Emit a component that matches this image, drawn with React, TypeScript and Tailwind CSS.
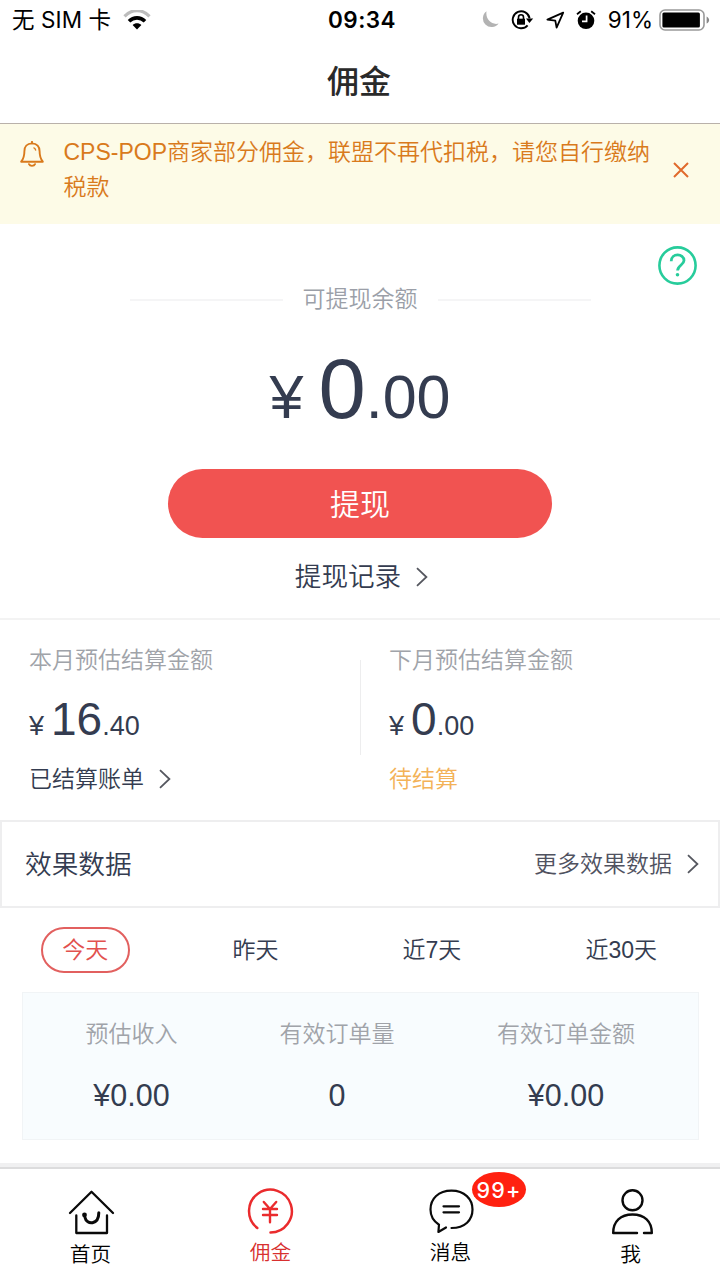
import type { ReactNode } from "react";

const Chevron = () => (
  <svg width="12" height="20" viewBox="0 0 12 20" fill="none" stroke="#55575f" strokeWidth="1.8">
    <path d="M1 1.2 10.4 10 1 18.8" />
  </svg>
);

const StatusBar = () => (
  <div className="flex h-10 items-center justify-between pl-3 pr-[10px] font-['Inter','Noto_Sans_CJK_SC',sans-serif] font-normal text-black">
    <div className="flex w-[240px] items-center">
      <span className="whitespace-pre text-[22.500px] tracking-[0.1px]">无 SIM 卡</span>
      <svg className="ml-3" width="28" height="20" viewBox="0 0 28 20" fill="none">
        <path d="M1.500 6.300C9-1.300 19-1.300 26.500 6.300" stroke="#bdbdbd" strokeWidth="3.200" />
        <path d="M6 11.300c4.600-4.600 11.400-4.600 16 0" stroke="#000" strokeWidth="3.600" />
        <path d="M14 19.400 9.600 14.900c2.400-2.200 6.400-2.200 8.800 0Z" fill="#000" />
      </svg>
    </div>
    <span className="ml-0.5 text-[22.500px] font-semibold tracking-[0.500px]">09:34</span>
    <div className="flex w-[240px] items-center justify-end">
      <svg width="18" height="18" viewBox="0 0 18 18">
        <path d="M5.500.300A8.700 8.700 0 1 0 17.600 12.500C11 14.500 4.200 8.500 5.500.300Z" fill="#b3b3b3" />
      </svg>
      <svg className="ml-[12px]" width="23" height="20" viewBox="0 0 23 20" fill="none" stroke="#000" strokeWidth="1.9">
        <path d="M16.600 15.400A8.500 8.500 0 1 1 18.600 8.400" />
        <path d="m15 8.600 7.200 0-3.800 4.400Z" fill="#000" stroke="none" />
        <rect x="6" y="8.700" width="8" height="6" fill="#000" stroke="none" />
        <path d="M7.500 9V7.200a2.500 2.500 0 0 1 5 0V9" strokeWidth="1.6" />
      </svg>
      <svg className="ml-[12px]" width="19" height="18" viewBox="0 0 19 18" fill="none" stroke="#000" strokeWidth="1.8" strokeLinejoin="round">
        <path d="M17.200 1.600 1.400 8.600 9.300 9.700 10.600 16.600Z" />
      </svg>
      <svg className="ml-[11px]" width="20" height="20" viewBox="0 0 20 20" fill="none">
        <circle cx="10" cy="10.800" r="8.300" fill="#000" />
        <path d="M1 4.200 4.800 1.200M19 4.200 15.200 1.200" stroke="#000" strokeWidth="1.8" />
        <path d="M10.600 5.500v5.800H6" stroke="#fff" strokeWidth="1.7" />
      </svg>
      <span className="ml-[12px] text-[22.500px]">91%</span>
      <svg className="ml-[6px]" width="51" height="22" viewBox="0 0 51 22">
        <rect x="1" y="1" width="44" height="20" rx="5" fill="none" stroke="#999" strokeWidth="1.6" />
        <rect x="3.400" y="3.600" width="37.500" height="14.800" rx="1.5" fill="#000" />
        <path d="M47.600 7.400c3.400 2 3.400 5.200 0 7.200Z" fill="#888" />
      </svg>
    </div>
  </div>
);

const Notice = () => (
  <div className="flex h-[100px] bg-[#fdfbe7] pl-5 text-[#d97a1c]">
    <svg className="mt-[17px] shrink-0" width="24" height="27" viewBox="0 0 24 27" fill="none" stroke="#d97a1c" strokeWidth="1.9" strokeLinejoin="round">
      <path d="M12 2.400c-5 0-7.600 3.500-7.600 7.800 0 5.300-.9 7.600-3.200 10.500h21.600c-2.300-2.900-3.200-5.200-3.200-10.500 0-4.300-2.600-7.800-7.600-7.800Z" />
      <path d="M12 2.400V.7M9 23.200c1 2.200 5 2.200 6 0" strokeLinecap="round" />
      <path d="M13.500 6.700c1.400.4 2 1.300 2.300 2.800" strokeWidth="1.4" />
    </svg>
    <p className="ml-[19.500px] mt-[11px] w-[594px] shrink-0 text-[23px] leading-[35px]">
      CPS-POP商家部分佣金，联盟不再代扣税，请您自行缴纳税款
    </p>
    <svg className="ml-[15.500px] mt-[38px]" width="16" height="16" viewBox="0 0 16 16" stroke="#e06a2c" strokeWidth="2">
      <path d="m1 1 14 14M15 1 1 15" />
    </svg>
  </div>
);

const Amount = ({ whole, cents }: { whole: string; cents: string }) => (
  <div className="flex h-[50px] items-baseline text-[27px] leading-[50px] text-[#343c50]">
    <span>¥</span>
    <span className="ml-[7px] text-[46px]">{whole}</span>
    <span>.{cents}</span>
  </div>
);

const Balance = () => (
  <section className="relative flex h-[396px] flex-col items-center border-b-2 border-[#f3f3f3] text-[#343c50]">
    <svg className="absolute right-[22px] top-[21px]" width="41" height="41" viewBox="0 0 41 41" fill="none" stroke="#27cc9b" strokeWidth="2.6">
      <circle cx="20.500" cy="20.500" r="18.100" />
      <path d="M14.200 16.200c0-8.400 12.800-8 12.800-.6 0 4.200-6.400 4.800-6.400 10" strokeWidth="2.8" />
      <circle cx="20.500" cy="29.800" r="1.8" fill="#27cc9b" stroke="none" />
    </svg>
    <div className="mt-[57px] flex h-9 items-center gap-5">
      <i className="mt-0.5 h-[2px] w-[153px] bg-[#f5f5f6]" />
      <span className="text-[23px] leading-9 text-[#9b9fa8]">可提现余额</span>
      <i className="mt-0.5 h-[2px] w-[153px] bg-[#f5f5f6]" />
    </div>
    <div className="mt-[22px] flex h-[100px] items-baseline text-[61px] leading-[100px]">
      <span>¥</span>
      <span className="ml-[15px] text-[85px]">0</span>
      <span>.00</span>
    </div>
    <button className="mt-[30px] h-[69px] w-[384px] rounded-full bg-[#f15351] pt-0.5 text-[30px] text-white">提现</button>
    <div className="ml-[3px] mt-5 flex h-[38px] items-center gap-[15px] text-[26.600px]">
      <span className="pt-0.5">提现记录</span>
      <Chevron />
    </div>
  </section>
);

const Settlement = () => (
  <section className="flex h-[200px] text-[23px] leading-8">
    <div className="w-[360px] pl-[29px] pt-6">
      <div className="text-[#a0a3a9]">本月预估结算金额</div>
      <div className="mt-[18px]"><Amount whole="16" cents="40" /></div>
      <div className="mt-[19px] flex items-center gap-[15px] text-[#343c50]">已结算账单<Chevron /></div>
    </div>
    <i className="mt-10 h-[95px] w-px bg-[#ededee]" />
    <div className="pl-7 pt-6">
      <div className="text-[#a0a3a9]">下月预估结算金额</div>
      <div className="mt-[18px]"><Amount whole="0" cents="00" /></div>
      <div className="mt-[19px] text-[#f3b257]">待结算</div>
    </div>
  </section>
);

const stats = [
  { label: "预估收入", value: "¥0.00" },
  { label: "有效订单量", value: "0" },
  { label: "有效订单金额", value: "¥0.00" },
];

const Performance = () => (
  <section className="text-[#343c50]">
    <div className="flex h-[88px] items-center justify-between border-2 border-[#eeeeef] pl-[23px] pr-[19px]">
      <h2 className="pt-0.5 text-[26.700px]">效果数据</h2>
      <div className="flex items-center gap-[15px] text-[23px] text-[#50525f]">更多效果数据<Chevron /></div>
    </div>
    <div className="flex h-[84px] items-center justify-between pl-[41px] pr-[63px] text-[23px]">
      <span className="flex h-[46px] w-[88.500px] items-center justify-center rounded-full border-2 border-[#e2605f] text-[#e2514e]">今天</span>
      <span className="-ml-[21px]">昨天</span>
      <span>近7天</span>
      <span>近30天</span>
    </div>
    <div className="ml-[22px] grid h-[148px] w-[677px] grid-cols-[217px_194px_264px] border border-[#f1f4f6] bg-[#f8fcfe]">
      {stats.map((s) => (
        <div key={s.label} className="flex flex-col items-center pt-[25px]">
          <span className="text-[23px] leading-8 text-[#a0a3a9]">{s.label}</span>
          <span className="mt-[27px] text-[30.500px] leading-9">{s.value}</span>
        </div>
      ))}
    </div>
  </section>
);

const Tab = ({ label, active, low, children }: { label: string; active?: boolean; low?: boolean; children: ReactNode }) => (
  <div className={`relative flex w-[180px] flex-col items-center pt-[18px] text-[20.700px] leading-[30px] ${active ? "text-[#d8302f]" : "text-black"}`}>
    {children}
    <span className={low ? "ml-px mt-0.5" : "ml-px mt-px"}>{label}</span>
  </div>
);

const TabBar = () => (
  <nav className="mt-[23px] flex h-[117px] border-t-4 border-[#f0f0f1] bg-white">
    <div className="flex w-full border-t-2 border-[#dcdcdd]">
      <Tab label="首页" low>
        <svg className="ml-0.5 mt-px" width="48" height="50" viewBox="0 0 48 50" fill="none" stroke="#0a0a0a" strokeWidth="2.3" strokeLinecap="round" strokeLinejoin="round">
          <path d="M3 25 24.500 3.700 46 25M9.300 27.500v17.500H40V27.500" />
          <path d="M18 29.500c1.600 8 13.800 7.400 13.800-4.800" strokeWidth="3" />
          <circle cx="17.500" cy="27" r="2.400" fill="#0a0a0a" stroke="none" />
        </svg>
      </Tab>
      <Tab label="佣金" active>
        <svg width="48" height="50" viewBox="0 0 48 50" fill="none" stroke="#ea2b2d" strokeWidth="2.5" strokeLinecap="round">
          <path d="M11.300 41A21.400 21.400 0 1 1 24.500 45.500" />
          <path d="m17.800 15 6.200 7 6.200-7M17 22h14M17 28h14M24 22v13.200" strokeWidth="2.4" />
        </svg>
      </Tab>
      <Tab label="消息">
        <svg className="ml-0.5" width="48" height="50" viewBox="0 0 48 50" fill="none" stroke="#0a0a0a" strokeWidth="2.2" strokeLinecap="round" strokeLinejoin="round">
          <path d="M24.500 41C38 41 45.500 33 45.500 22.500S37.500 3.700 24.500 3.700 3.500 11.500 3.500 22.500C3.500 29 7 34.500 12 37.700L11.400 45 19 40.500" />
          <path d="M16.500 19.300h15.500M16.500 25.300h15.500" />
        </svg>
        <span className="absolute left-[112px] top-[3px] flex h-[35px] w-[54px] items-center justify-center rounded-[50%] bg-[#ff2110] pt-px font-['Inter','Liberation_Sans',sans-serif] text-[21.500px] font-medium tracking-[1.2px] text-white">99+</span>
      </Tab>
      <Tab label="我" low>
        <svg className="ml-1 mt-px" width="48" height="50" viewBox="0 0 48 50" fill="none" stroke="#0a0a0a" strokeWidth="2.4" strokeLinecap="round" strokeLinejoin="round">
          <circle cx="24.500" cy="12.300" r="10" />
          <path d="M29 45H5.200c0-11.500 7.300-18.500 19.300-18.500s19.300 7 19.300 18.500H36" />
        </svg>
      </Tab>
    </div>
  </nav>
);

export default function App() {
  return (
    <main className="h-[1280px] w-[720px] overflow-hidden bg-white font-['Liberation_Sans','Noto_Sans_CJK_SC',sans-serif] font-[350]">
      <StatusBar />
      <header className="flex h-[84px] items-center justify-center border-b border-[#b9b1aa] pr-0.5 text-[32px] font-medium text-[#2a2a2a]">佣金</header>
      <Notice />
      <Balance />
      <Settlement />
      <Performance />
      <TabBar />
    </main>
  );
}
